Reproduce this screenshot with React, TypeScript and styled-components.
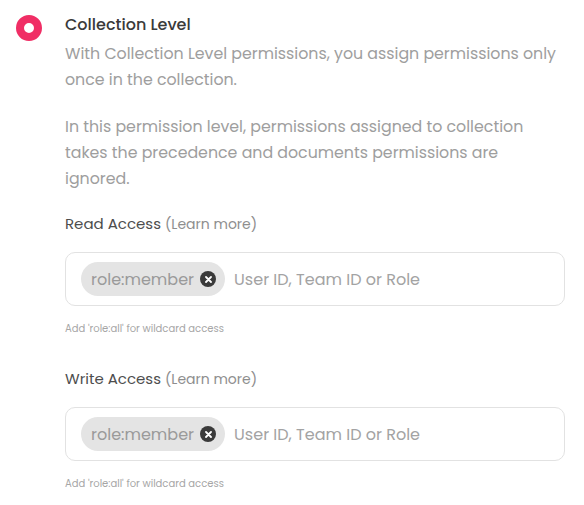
import React from "react";
import styled, { createGlobalStyle } from "styled-components";

const Global = createGlobalStyle`
  html, body { margin: 0; padding: 0; background: #ffffff; }
  body { font-family: "Poppins", "Open Sans", "Liberation Sans", sans-serif; -webkit-font-smoothing: antialiased; }
`;

const Page = styled.div`
  display: flex;
  align-items: flex-start;
  gap: 23px;
  padding: 15px 0 0 16px;
`;

const Radio = styled.span`
  flex: none;
  box-sizing: border-box;
  width: 26px;
  height: 26px;
  border-radius: 50%;
  border: 8px solid #f02e65;
  background: #ffffff;
`;

const Content = styled.div`
  width: 500px;
  display: flex;
  flex-direction: column;
`;

const Title = styled.div`
  font-size: 16px;
  font-weight: 500;
  line-height: 18px;
  margin-top: 1px;
  color: #3a3a3a;
`;

const Desc = styled.p<{ $first?: boolean }>`
  margin: ${(p) => (p.$first ? "7px" : "21px")} 0 0 0;
  max-width: 497px;
  font-size: 15.8px;
  line-height: 26px;
  color: #9e9e9e;
`;

const Field = styled.div<{ $top: number }>`
  display: flex;
  flex-direction: column;
  margin-top: ${(p) => p.$top}px;
`;

const Label = styled.div`
  font-size: 15px;
  line-height: 20px;
  color: #4d4d4d;
`;

const Learn = styled.span`
  font-size: 14px;
  color: #8e8e8e;
  margin-left: 4px;
`;

const InputBox = styled.div`
  margin-top: 18px;
  box-sizing: border-box;
  height: 54px;
  border: 1px solid #e2e2e2;
  border-radius: 10px;
  display: flex;
  align-items: center;
  padding: 0 15px;
  gap: 9px;
`;

const Tag = styled.span`
  display: inline-flex;
  align-items: center;
  gap: 6px;
  height: 34px;
  padding: 0 9px 0 10px;
  border-radius: 17px;
  background: #e4e4e4;
  font-size: 16px;
  color: #9a9a9a;
`;

const Remove = styled.span`
  width: 16px;
  height: 16px;
  border-radius: 50%;
  background: #3a3a3a;
  display: inline-flex;
  align-items: center;
  justify-content: center;
`;

const Placeholder = styled.span`
  font-size: 16px;
  color: #a3a3a3;
`;

const Hint = styled.div`
  margin-top: 16px;
  font-size: 10px;
  line-height: 14px;
  color: #a6a6a6;
`;

const AccessField = ({ label, top }: { label: string; top: number }) => (
  <Field $top={top}>
    <Label>
      {label}
      <Learn>(Learn more)</Learn>
    </Label>
    <InputBox>
      <Tag>
        role:member
        <Remove>
          <svg width="7" height="7" viewBox="0 0 7 7">
            <path d="M1 1L6 6M6 1L1 6" stroke="#fff" strokeWidth="1.8" strokeLinecap="round" />
          </svg>
        </Remove>
      </Tag>
      <Placeholder>User ID, Team ID or Role</Placeholder>
    </InputBox>
    <Hint>Add 'role:all' for wildcard access</Hint>
  </Field>
);

export default function App() {
  return (
    <>
      <Global />
      <Page>
        <Radio />
        <Content>
          <Title>Collection Level</Title>
          <Desc $first>
            With Collection Level permissions, you assign permissions only once in the collection.
          </Desc>
          <Desc>
            In this permission level, permissions assigned to collection takes the precedence and documents
            permissions are ignored.
          </Desc>
          <AccessField label="Read Access" top={22} />
          <AccessField label="Write Access" top={33} />
        </Content>
      </Page>
    </>
  );
}
